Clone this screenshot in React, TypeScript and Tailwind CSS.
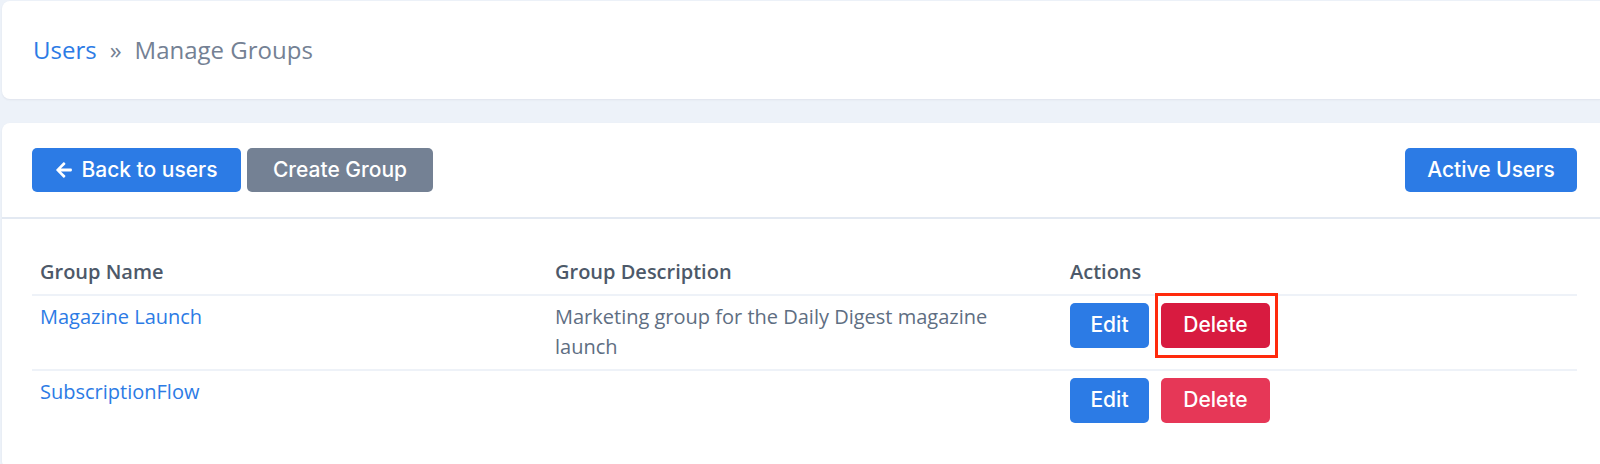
import React from 'react'
import { FaArrowLeft } from 'react-icons/fa'

const groups = [
  { name: 'Magazine Launch', description: 'Marketing group for the Daily Digest magazine launch', focused: true },
  { name: 'SubscriptionFlow', description: '', focused: false },
]

const btn = "inline-flex items-center justify-center rounded-[5px] text-white text-[21px] font-medium font-['Inter',sans-serif]"

export default function App() {
  return (
    <main className="h-[464px] w-[1600px] overflow-hidden bg-[#edf2f9] pl-[2px] pt-[1px] font-['Open_Sans',sans-serif]">
      {/* Breadcrumb */}
      <div className="flex h-[98px] w-[1605px] items-center rounded-lg bg-white px-[31px] text-[24px] shadow-[0_1px_2px_rgba(65,69,88,0.08)]">
        <a className="text-[#2c7be5]">Users</a>
        <span className="mx-[13px] text-[#748194]">»</span>
        <span className="text-[#748194]">Manage Groups</span>
      </div>

      {/* Groups card */}
      <section className="mt-[24px] w-[1605px] rounded-lg bg-white shadow-[0_1px_2px_rgba(65,69,88,0.08)]">
        <div className="flex items-center justify-between border-b-2 border-[#e3e9f2] px-[30px] py-[25px]">
          <div className="flex gap-[6px]">
            <button className={`${btn} h-[44px] w-[209px] gap-[8px] bg-[#2c7be5]`}>
              <FaArrowLeft className="h-[18px] w-[18px]" />
              Back to users
            </button>
            <button className={`${btn} h-[44px] w-[186px] bg-[#748194]`}>Create Group</button>
          </div>
          <button className={`${btn} h-[44px] w-[172px] bg-[#2c7be5]`}>Active Users</button>
        </div>

        <div className="px-[30px] pt-[32px] pb-[40px]">
          <table className="w-full table-fixed border-collapse text-left text-[20px] leading-[30.5px]">
            <thead>
              <tr className="border-b-2 border-[#eef2f8]">
                <th className="px-2 py-[6px] font-semibold text-[#4d5969]">Group Name</th>
                <th className="px-2 py-[6px] font-semibold text-[#4d5969]">Group Description</th>
                <th className="px-2 py-[6px] font-semibold text-[#4d5969]">Actions</th>
              </tr>
            </thead>
            <tbody>
              {groups.map((g, i) => (
                <tr key={g.name} className={i === 0 ? 'border-b-2 border-[#eef2f8]' : ''}>
                  <td className="px-2 py-[6px] align-top text-[#2c7be5]">{g.name}</td>
                  <td className="px-2 py-[6px] pr-[60px] align-top text-[#5e6e82]">{g.description}</td>
                  <td className="px-2 py-[6px] align-top">
                    <div className="mt-[1px] flex gap-[12px]">
                      <button className={`${btn} h-[45px] w-[79px] bg-[#2c7be5]`}>Edit</button>
                      <span className="relative inline-flex">
                        <button
                          className={`${btn} h-[45px] w-[109px] ${g.focused ? 'bg-[#d81b40]' : 'bg-[#e63757]'}`}
                        >
                          Delete
                        </button>
                        {g.focused && (
                          <span className="pointer-events-none absolute -top-[10px] -bottom-[10px] -left-[6px] -right-[8px] border-[3px] border-[#ff2a0c]" />
                        )}
                      </span>
                    </div>
                  </td>
                </tr>
              ))}
            </tbody>
          </table>
        </div>
      </section>
    </main>
  )
}
